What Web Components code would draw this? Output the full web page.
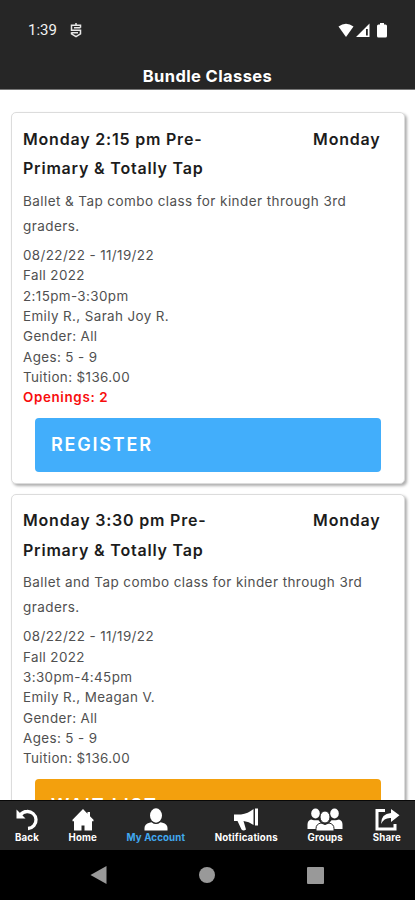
<!DOCTYPE html>
<html lang="en">
<head>
<meta charset="UTF-8">
<meta name="viewport" content="width=device-width, initial-scale=1">
<title>Bundle Classes</title>
<style>
  html, body {
    height: 100%;
    margin: 0;
    overflow: hidden;
    background: #fff;
    font-family: Inter, Roboto, sans-serif;
  }
</style>
</head>
<body>
<studio-app></studio-app>

<script>
class StatusBar extends HTMLElement {
  constructor() {
    super();
    this.attachShadow({ mode: "open" });
  }

  connectedCallback() {
    this.shadowRoot.innerHTML = `
      <style>
        :host {
          display: flex;
          align-items: center;
          height: 60px;
          padding: 0 28px;
          box-sizing: border-box;
          background: #262626;
          color: #f1f1f1;
          font: 400 15px/20px Roboto, sans-serif;
        }
        .app { margin-left: 13px; }
        .icons { display: flex; align-items: center; margin-left: auto; gap: 2px; }
        .battery { margin-left: 5px; }
        svg { display: block; }
      </style>
      <span>1:39</span>
      <svg class="app" width="12" height="15" viewBox="0 0 12 15" fill="none" stroke="#e8e8e8" stroke-width="1.5">
        <path d="M6 0v2M10.500 4.800V2.300h-9v4.900h9v3.600L6 13.700l-4.500-2.900V9.300M4 4.700h6.500M1.500 9.700H8"/>
      </svg>
      <div class="icons">
        <svg width="16" height="15" viewBox="0 0 16 15" fill="#fff"><path d="M.500 3.500Q8-1.900 15.500 3.500L8 14z"/></svg>
        <svg width="14" height="15" viewBox="0 0 14 15" fill="#fff"><path fill-rule="evenodd" d="M13.500.500V14H0zM10 6v6.500h1.800V6z"/></svg>
        <svg class="battery" width="10" height="15" viewBox="0 0 10 15" fill="#fff"><path d="M3 0h4v1.500h1.500q1.500 0 1.500 1.500v10q0 1.500-1.500 1.500h-7Q0 14.500 0 13V3q0-1.500 1.500-1.500H3z"/></svg>
      </div>
    `;
  }
}

class PageHeader extends HTMLElement {
  constructor() {
    super();
    this.attachShadow({ mode: "open" });
  }

  connectedCallback() {
    this.shadowRoot.innerHTML = `
      <style>
        :host {
          display: block;
          height: 30px;
          box-sizing: border-box;
          padding-top: 4px;
          background: #262626;
          border-bottom: 1px solid #777;
          color: #fff;
          font-size: 16.500px;
          font-weight: 700;
          line-height: 24px;
          letter-spacing: 0.4px;
          text-align: center;
        }
      </style>
      <slot></slot>
    `;
  }
}

class ClassCard extends HTMLElement {
  constructor() {
    super();
    this.attachShadow({ mode: "open" });
  }

  connectedCallback() {
    this.shadowRoot.innerHTML = `
      <style>
        :host {
          display: block;
          box-sizing: border-box;
          height: 372px;
          padding: 11.500px 23px 0 11px;
          border: 1.5px solid #dcdcdc;
          border-radius: 5px;
          background: #fff;
          box-shadow: 2px 2px 3px rgba(0, 0, 0, 0.32);
          color: #505050;
        }
        .heading {
          display: flex;
          justify-content: space-between;
          color: #1c1c1c;
          font-size: 16px;
          font-weight: 600;
          line-height: 29.700px;
          letter-spacing: 0.8px;
        }
        .title { width: 200px; }
        .description {
          margin-top: 5px;
          font-size: 13.500px;
          line-height: 25px;
          letter-spacing: 0.42px;
          white-space: nowrap;
        }
        .details {
          margin-top: 6px;
          font-size: 13.400px;
          line-height: 20.350px;
          letter-spacing: 0.4px;
        }
        ::slotted([slot="openings"]) {
          color: #f80d0d;
          font-weight: 600;
          letter-spacing: 0.65px;
        }
        .action {
          display: flex;
          align-items: center;
          height: 54px;
          margin: 10px 0 0 12px;
          padding-left: 16px;
          box-sizing: border-box;
          border-radius: 4px;
          background: var(--action-color, #42aefb);
          color: #fff;
          font-size: 18px;
          font-weight: 600;
          letter-spacing: 1.800px;
        }
      </style>
      <div class="heading">
        <div class="title"><slot name="title"></slot></div>
        <div><slot name="day"></slot></div>
      </div>
      <div class="description"><slot name="description"></slot></div>
      <div class="details"><slot></slot><slot name="openings"></slot></div>
      <div class="action"><slot name="action"></slot></div>
    `;
  }
}

const TAB_ICONS = {
  back: `<svg width="24" height="24" viewBox="0 0 24 24"><path d="M5 7.500Q8 3.500 12 3.500A8.500 8.500 0 0 1 13 20.500" fill="none" stroke="#fff" stroke-width="3.300"/><path d="M1.500 1.500V10.500h9z" fill="#fff"/></svg>`,
  home: `<svg width="24" height="24" viewBox="0 0 24 24" fill="#fff"><path d="M12 1L1.500 11.800v1.400H3V22.500h7.500v-5h3v5H21v-9.300h1.500v-1.400L19 8.300V4h-2.500v1.800z"/></svg>`,
  account: `<svg width="24" height="24" viewBox="0 0 24 24" fill="#fff"><ellipse cx="12" cy="7.500" rx="6" ry="7.200"/><path d="M.500 22.500v-2.500q0-4 5-5.300l2-.500Q12 18 16.500 14.200l2 .500q5 1.300 5 5.300v2.500z"/></svg>`,
  notifications: `<svg width="26" height="24" viewBox="0 0 26 24" fill="#fff"><path d="M1 6.500h7Q15 5.500 20.500 1v16Q16 13.500 10.500 13l2.500 8.500q-2.500 2-4.500 0L4.500 13H1zM22 .500h3v17h-3z"/></svg>`,
  groups: `<svg width="36" height="24" viewBox="0 0 36 24" fill="#fff"><ellipse cx="8.500" cy="5.500" rx="4.300" ry="5"/><ellipse cx="27.500" cy="5.500" rx="4.300" ry="5"/><path d="M.500 21v-4.500q0-4 3.500-5l3 .700h4.500l2.500 3q-4 1.300-5 5.800zM35.500 21v-4.500q0-4-3.500-5l-3 .700h-4.500l-2.500 3q4 1.300 5 5.800z"/><g stroke="#262626" stroke-width="1"><path d="M9 23v-2.500q0-4.500 5-5.500l4 1.500 4-1.500q5 1 5 5.500V23z"/><ellipse cx="18" cy="9" rx="5" ry="6"/></g></svg>`,
  share: `<svg width="26" height="24" viewBox="0 0 26 24"><path d="M11 2.500H3v18.500h18V16" fill="none" stroke="#fff" stroke-width="3"/><path d="M17 1l8.500 6.300L17 14v-4Q10 9.500 7 16q0-10.500 10-11z" fill="#fff"/></svg>`
};

class TabItem extends HTMLElement {
  constructor() {
    super();
    this.attachShadow({ mode: "open" });
  }

  connectedCallback() {
    this.shadowRoot.innerHTML = `
      <style>
        :host {
          display: flex;
          flex-direction: column;
          align-items: center;
          color: #fff;
          font-size: 9.700px;
          font-weight: 700;
          line-height: 12px;
          letter-spacing: 0.15px;
          white-space: nowrap;
        }
        :host([active]) { color: #41a9f0; }
        svg { display: block; }
      </style>
      ${TAB_ICONS[this.getAttribute("icon")]}
      <span><slot></slot></span>
    `;
  }
}

class TabBar extends HTMLElement {
  constructor() {
    super();
    this.attachShadow({ mode: "open" });
  }

  connectedCallback() {
    this.shadowRoot.innerHTML = `
      <style>
        :host {
          display: flex;
          justify-content: space-between;
          box-sizing: border-box;
          height: 50px;
          padding: 7px 14px 0 15px;
          border-top: 1px solid #080808;
          background: #262626;
        }
      </style>
      <slot></slot>
    `;
  }
}

class SystemNav extends HTMLElement {
  constructor() {
    super();
    this.attachShadow({ mode: "open" });
  }

  connectedCallback() {
    this.shadowRoot.innerHTML = `
      <style>
        :host {
          display: flex;
          align-items: center;
          justify-content: space-between;
          box-sizing: border-box;
          height: 50px;
          padding: 0 91px 0 90px;
          background: #000;
        }
        svg { display: block; }
      </style>
      <svg width="17" height="18" viewBox="0 0 17 18" fill="#999"><path d="M16.500 0v18L.500 9z"/></svg>
      <svg width="16" height="16" viewBox="0 0 16 16" fill="#999"><circle cx="8" cy="8" r="8"/></svg>
      <svg width="17" height="17" viewBox="0 0 17 17" fill="#999"><rect width="17" height="17" rx="1"/></svg>
    `;
  }
}

class StudioApp extends HTMLElement {
  constructor() {
    super();
    this.attachShadow({ mode: "open" });
  }

  connectedCallback() {
    this.shadowRoot.innerHTML = `
      <style>
        :host {
          display: flex;
          flex-direction: column;
          height: 100vh;
        }
        main {
          flex: 1;
          min-height: 0;
          overflow: hidden;
          padding: 22px 10.500px 0 11px;
        }
        class-card { margin-bottom: 9.500px; }
        .full { --action-color: #f3a00d; }
      </style>
      <status-bar></status-bar>
      <page-header>Bundle Classes</page-header>
      <main>
        <class-card>
          <span slot="title">Monday 2:15 pm Pre-Primary &amp; Totally Tap</span>
          <span slot="day">Monday</span>
          <span slot="description">Ballet &amp; Tap combo class for kinder through 3rd<br>graders.</span>
          <div>08/22/22 - 11/19/22</div>
          <div>Fall 2022</div>
          <div>2:15pm-3:30pm</div>
          <div>Emily R., Sarah Joy R.</div>
          <div>Gender: All</div>
          <div>Ages: 5 - 9</div>
          <div>Tuition: $136.00</div>
          <div slot="openings">Openings: 2</div>
          <span slot="action">REGISTER</span>
        </class-card>
        <class-card class="full">
          <span slot="title">Monday 3:30 pm Pre-Primary &amp; Totally Tap</span>
          <span slot="day">Monday</span>
          <span slot="description">Ballet and Tap combo class for kinder through 3rd<br>graders.</span>
          <div>08/22/22 - 11/19/22</div>
          <div>Fall 2022</div>
          <div>3:30pm-4:45pm</div>
          <div>Emily R., Meagan V.</div>
          <div>Gender: All</div>
          <div>Ages: 5 - 9</div>
          <div>Tuition: $136.00</div>
          <span slot="action">WAIT LIST</span>
        </class-card>
      </main>
      <tab-bar>
        <tab-item icon="back">Back</tab-item>
        <tab-item icon="home">Home</tab-item>
        <tab-item icon="account" active>My Account</tab-item>
        <tab-item icon="notifications">Notifications</tab-item>
        <tab-item icon="groups">Groups</tab-item>
        <tab-item icon="share">Share</tab-item>
      </tab-bar>
      <system-nav></system-nav>
    `;
  }
}

customElements.define("status-bar", StatusBar);
customElements.define("page-header", PageHeader);
customElements.define("class-card", ClassCard);
customElements.define("tab-item", TabItem);
customElements.define("tab-bar", TabBar);
customElements.define("system-nav", SystemNav);
customElements.define("studio-app", StudioApp);
</script>
</body>
</html>
